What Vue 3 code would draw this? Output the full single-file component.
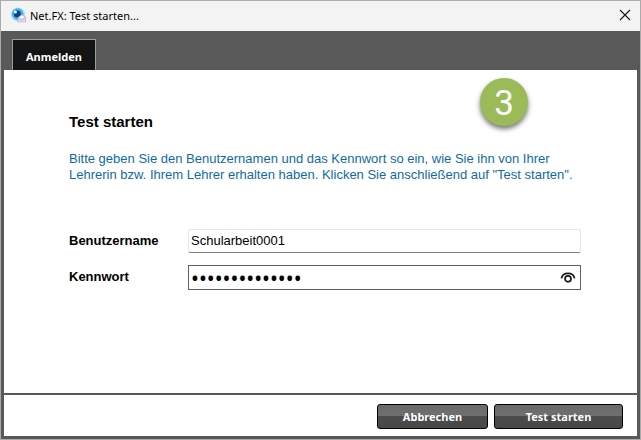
<template>
  <div class="window">
    <!-- Title bar -->
    <header class="titlebar">
      <svg class="app-icon" viewBox="0 0 16 16" aria-hidden="true">
        <circle cx="8" cy="7.4" r="7" fill="#a9dcf4" />
        <circle cx="7.6" cy="7" r="5.7" fill="#45b0e6" />
        <circle cx="7.4" cy="6.9" r="3.5" fill="#0a4580" />
        <circle cx="5.4" cy="4.9" r="1.5" fill="#e8f8ff" />
        <path d="M8 10.5 L11.8 7.7 L15.5 10 V14.8 H8 Z" fill="#dcdcf4" stroke="#a8a4d0" stroke-width=".6" />
        <path d="M8.4 11 L11.8 13 L15.2 10.6" fill="none" stroke="#a8a4d0" stroke-width=".7" />
        <path d="M9.4 10.2 L11.8 8.5 L14.2 10 L11.8 11.6 Z" fill="#fff" />
      </svg>
      <span class="title">Net.FX: Test starten...</span>
      <button class="close" type="button" aria-label="Schließen">
        <svg viewBox="0 0 12 12"><path d="M1 1 L11 11 M11 1 L1 11" /></svg>
      </button>
    </header>

    <nav class="tabs">
      <button class="tab" type="button">Anmelden</button>
    </nav>

    <!-- Login form -->
    <form class="login" @submit.prevent="startTest">
      <main class="content">
        <h1>Test starten</h1>
        <p class="hint">
          Bitte geben Sie den Benutzernamen und das Kennwort so ein, wie Sie ihn von Ihrer<br />
          Lehrerin bzw. Ihrem Lehrer erhalten haben. Klicken Sie anschließend auf "Test starten".
        </p>

        <div class="row">
          <label for="user">Benutzername</label>
          <input id="user" v-model="user" class="field" type="text" />
        </div>
        <div class="row">
          <label for="password">Kennwort</label>
          <div class="field password">
            <input id="password" v-model="password" :type="showPassword ? 'text' : 'password'" />
            <button class="reveal" type="button" aria-label="Kennwort anzeigen" @click="showPassword = !showPassword">
              <svg viewBox="0 0 16 12">
                <path d="M1.4 6.4 C2.6 -0.2 13.4 -0.2 14.6 6.4" />
                <circle cx="8" cy="6.8" r="3" />
              </svg>
            </button>
          </div>
        </div>
        <span class="step">3</span>
      </main>

      <footer class="actions">
        <button class="action cancel" type="button" @click="cancel">Abbrechen</button>
        <button class="action start" type="submit">Test starten</button>
      </footer>
    </form>
  </div>
</template>

<script setup>
import { ref } from 'vue';

// form fields
const user = ref('Schularbeit0001');
const password = ref('geheimeswort01');
const showPassword = ref(false);

const startTest = () => {
  console.log(`Test gestartet: ${user.value}`);
};

const cancel = () => {
  user.value = '';
  password.value = '';
};
</script>

<style>
body {
  background: #fff;
}
</style>

<style scoped>
* {
  box-sizing: border-box;
}

.window {
  display: flex;
  flex-direction: column;
  min-height: 100vh;
  border: 1px solid #ababab;
  background: #595959;
  font-family: "Liberation Sans", Arial, sans-serif;
  color: #000;
}

button {
  padding: 0;
  border: none;
  background: none;
}

/* Title bar */
.titlebar {
  display: flex;
  align-items: center;
  height: 30px;
  padding: 0 9px 2px;
  background: #f3f3f3;
}

.app-icon {
  width: 16px;
  height: 16px;
}

.title {
  flex: 1;
  margin-left: 4px;
  font-family: "Noto Sans", "Open Sans", sans-serif;
  font-size: 11px;
}

.close {
  width: 12px;
  height: 12px;
}

.close svg {
  display: block;
}

.close path {
  stroke: #1a1a1a;
  stroke-width: 1.1;
}

/* Tabs */
.tabs {
  display: flex;
  padding: 8px 11px 0;
}

.tab {
  height: 31px;
  padding: 3px 13px 0;
  border: 1px solid #9c9c9c;
  border-bottom: none;
  background: #141414;
  color: #fff;
  font-family: "Noto Sans", "Open Sans", sans-serif;
  font-size: 11px;
  font-weight: bold;
}

/* Form */
.login {
  display: flex;
  flex: 1;
  flex-direction: column;
  gap: 2px;
  margin: 0 3px 3px;
}

.content {
  position: relative;
  flex: 1;
  padding: 43px 56px 20px 65px;
  background: #fff;
}

h1 {
  margin: 0 0 20px;
  font-size: 15px;
  line-height: 18px;
}

.hint {
  margin: 0 0 46px;
  color: #0f6ba5;
  font-size: 13px;
  line-height: 16px;
  white-space: nowrap;
}

.row {
  display: flex;
  align-items: center;
  margin-bottom: 12px;
}

label {
  width: 119px;
  padding-bottom: 2px;
  font-size: 13px;
  font-weight: bold;
}

.field {
  flex: 1;
  min-width: 0;
  height: 24px;
  padding: 0 2px 2px;
  border: 1px solid #e6e6e6;
  border-bottom-color: #808080;
  border-radius: 2px;
  outline: none;
  background: #fff;
  font-family: inherit;
  font-size: 13px;
}

.password {
  display: flex;
  align-items: center;
  height: 25px;
  padding: 0 4px 0 2px;
  border-color: #5f5f5f;
  border-radius: 0;
}

.password input {
  flex: 1;
  min-width: 0;
  height: 20px;
  padding: 0;
  border: none;
  outline: none;
  font-family: "Noto Sans", sans-serif;
  font-size: 21px;
}

.reveal {
  width: 16px;
  height: 12px;
}

.reveal svg {
  display: block;
  fill: none;
  stroke: #1a1a1a;
  stroke-width: 1.7;
}

/* Step marker over the form */
.step {
  position: absolute;
  top: 8px;
  right: 109px;
  width: 48px;
  height: 48px;
  border-radius: 50%;
  background: #9bbb59;
  box-shadow: 0 3px 5px rgba(0, 0, 0, 0.55);
  color: #fff;
  font-family: Roboto, "Liberation Sans", sans-serif;
  font-size: 35px;
  line-height: 51px;
  text-align: center;
}

/* Footer buttons */
.actions {
  display: flex;
  justify-content: flex-end;
  gap: 6px;
  padding: 9px 14px 7px;
  background: #fff;
}

.action {
  height: 25px;
  border: 1px solid #000;
  border-radius: 3px;
  background: linear-gradient(#6a6a6a, #707070 50%, #4b4b4b 50%, #484848);
  color: #fff;
  font-family: "Noto Sans", "Open Sans", sans-serif;
  font-size: 11px;
  font-weight: bold;
}

.cancel {
  width: 111px;
}

.start {
  width: 129px;
}
</style>
